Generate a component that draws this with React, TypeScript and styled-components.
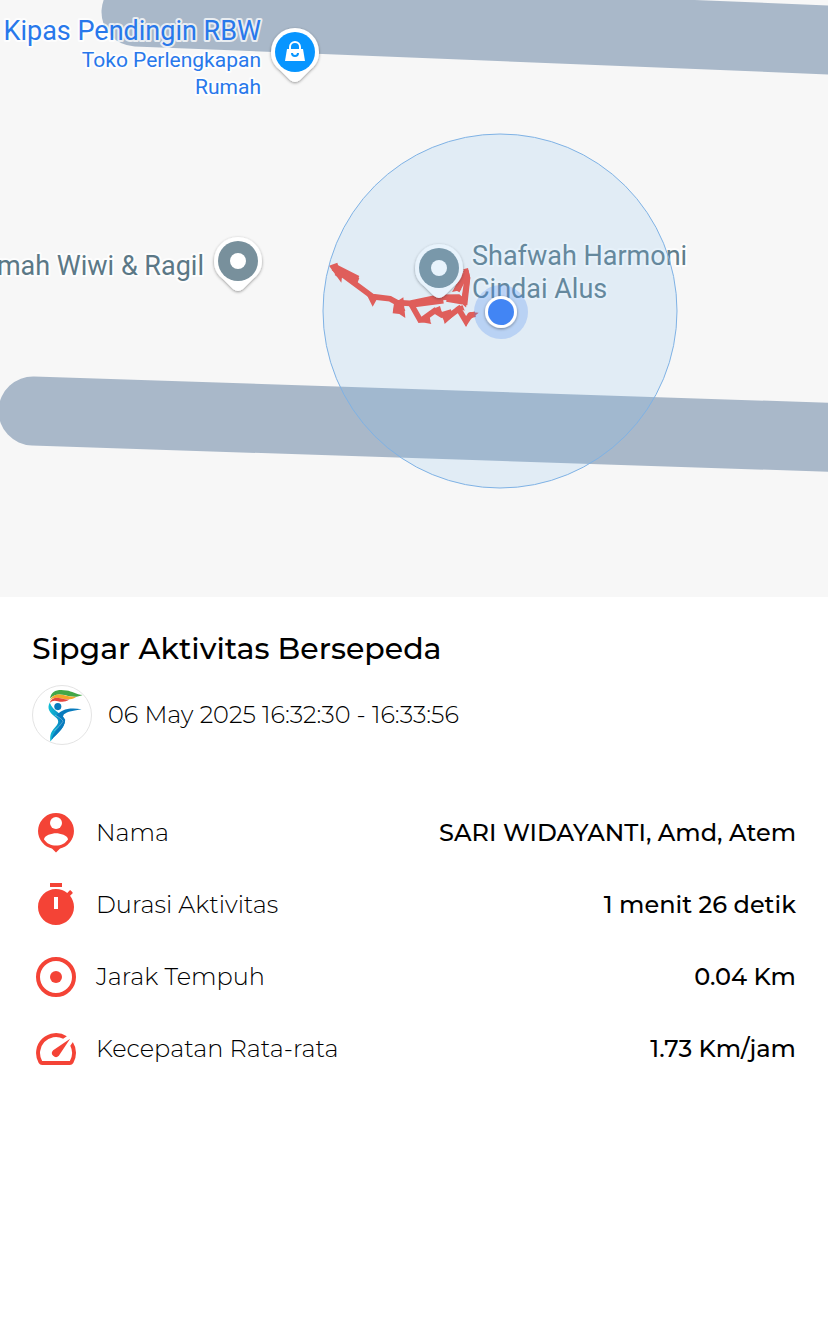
import React from "react";
import styled, { createGlobalStyle } from "styled-components";

const GlobalStyle = createGlobalStyle`
  *, *::before, *::after { box-sizing: border-box; }
  body {
    margin: 0;
    background: #ffffff;
    color: #000000;
    font-family: Montserrat, Inter, "Liberation Sans", sans-serif;
  }
`;

const Page = styled.main`
  display: flex;
  flex-direction: column;
  min-height: 100vh;
`;

const MapView = styled.svg`
  display: block;
  width: 100%;
  height: auto;
  background: #f7f7f7;
`;

const MapLabel = styled.text<{ $color: string; $small?: boolean }>`
  font-family: Roboto, "Liberation Sans", sans-serif;
  font-size: ${(p) => (p.$small ? 21 : 27)}px;
  fill: ${(p) => p.$color};
  stroke: #ffffff;
  stroke-opacity: 0.75;
  stroke-width: 4px;
  stroke-linejoin: round;
  paint-order: stroke;
`;

const Details = styled.section`
  display: flex;
  flex-direction: column;
  padding: 36px 32px;
`;

const Title = styled.h1`
  margin: 0 0 20px;
  font-size: 30px;
  font-weight: 500;
  line-height: 32px;
`;

const Meta = styled.div`
  display: flex;
  align-items: center;
  gap: 16px;
  margin-bottom: 52px;
`;

const Avatar = styled.svg`
  flex: none;
  width: 60px;
  height: 60px;
  border: 1px solid #e4e4e4;
  border-radius: 50%;
`;

const DateText = styled.time`
  font-size: 24px;
  font-weight: 300;
  line-height: 32px;
`;

const Stats = styled.dl`
  display: flex;
  flex-direction: column;
  margin: 0;
`;

const StatRow = styled.div`
  display: flex;
  align-items: center;
  justify-content: space-between;
  gap: 16px;
  min-height: 72px;
`;

const StatLabel = styled.dt`
  display: flex;
  align-items: center;
  gap: 16px;
  font-size: 24px;
  font-weight: 300;
  line-height: 32px;
`;

const StatValue = styled.dd`
  margin: 0;
  font-size: 24px;
  font-weight: 500;
  line-height: 32px;
  text-align: right;
`;

const StatIcon = styled.svg`
  flex: none;
  width: 48px;
  height: 48px;
  fill: #f44336;
`;

const PersonIcon = () => (
  <StatIcon viewBox="0 0 24 24" aria-hidden="true">
    <path d="M12 2a9 9 0 0 0-3.2 17.4c.6.2 1 .3 1.3.5L12 21.7l1.9-1.8c.3-.2.7-.3 1.3-.5A9 9 0 0 0 12 2z" />
    <circle cx="12" cy="7" r="3" fill="#fff" />
    <path
      d="M12 18.3c-2.5 0-4.7-1.2-6-3.1 0-2 4-3.1 6-3.1s6 1.1 6 3.1c-1.3 1.9-3.5 3.1-6 3.1z"
      fill="#fff"
    />
  </StatIcon>
);

const TimerIcon = () => (
  <StatIcon viewBox="0 0 24 24" aria-hidden="true">
    <path d="M15 1H9v2h6V1zm-4 13h2V8h-2v6zm8.03-6.61l1.42-1.42c-.43-.51-.9-.99-1.41-1.41l-1.42 1.42C16.07 4.74 14.12 4 12 4c-4.97 0-9 4.03-9 9s4.02 9 9 9 9-4.03 9-9c0-2.12-.74-4.07-1.97-5.61z" fillRule="evenodd" />
  </StatIcon>
);

const DistanceIcon = () => (
  <StatIcon viewBox="0 0 24 24" aria-hidden="true">
    <circle cx="12" cy="12" r="9" fill="none" stroke="#f44336" strokeWidth="2" />
    <circle cx="12" cy="12" r="3" />
  </StatIcon>
);

const SpeedIcon = () => (
  <StatIcon viewBox="0 0 24 24" aria-hidden="true">
    <path d="M20.38 8.57l-1.23 1.85a8 8 0 0 1-.22 7.58H5.07A8 8 0 0 1 15.58 6.85l1.85-1.23A10 10 0 0 0 3.35 19a2 2 0 0 0 1.72 1h13.85a2 2 0 0 0 1.74-1 10 10 0 0 0-.27-10.44zm-9.79 6.84a2 2 0 0 0 2.83 0l5.66-8.49-8.49 5.66a2 2 0 0 0 0 2.83z" />
  </StatIcon>
);

const stats = [
  { label: "Nama", value: "SARI WIDAYANTI, Amd, Atem", Icon: PersonIcon },
  { label: "Durasi Aktivitas", value: "1 menit 26 detik", Icon: TimerIcon },
  { label: "Jarak Tempuh", value: "0.04 Km", Icon: DistanceIcon },
  { label: "Kecepatan Rata-rata", value: "1.73 Km/jam", Icon: SpeedIcon },
];

/* Teardrop marker; x and y are the centre of its round head. */
const Pin = ({
  x,
  y,
  color,
  children,
}: {
  x: number;
  y: number;
  color: string;
  children: React.ReactNode;
}) => (
  <g transform={`translate(${x} ${y})`}>
    <path
      d="M0-24A24 24 0 0 0-24 0c0 9 4 14 10 19l9 9q5 4 10 0l9-9c6-5 10-10 10-19A24 24 0 0 0 0-24z"
      fill="#fff"
      filter="url(#pinShadow)"
    />
    <circle r="20" fill={color} />
    {children}
  </g>
);

const ActivityMap = () => (
  <MapView viewBox="0 0 828 597" role="img" aria-label="Peta rute aktivitas">
    <defs>
      <filter id="pinShadow" x="-30%" y="-30%" width="160%" height="160%">
        <feDropShadow dx="0" dy="1" stdDeviation="1.500" floodColor="#000" floodOpacity="0.4" />
      </filter>
    </defs>

    <g stroke="#a9b8c9" strokeWidth="69" strokeLinecap="round">
      <path d="M136 12L880 42" />
      <path d="M33 411L880 439" />
    </g>

    <g
      transform="translate(310 220) scale(.33333)"
      fill="none"
      stroke="#f44a3b"
      strokeWidth="17"
      strokeLinejoin="miter"
    >
      <path d="M70 143L188 230L240 236L262 248L300 250L385 232L445 231L462 246L472 173L467 152" />
      <path d="M72 142L143 178M80 156L98 168" strokeWidth="22" />
      <path
        d="M302 250L330 300L360 295M338 298L374 272L395 285L425 276M402 300L446 267L468 304L480 286L496 283"
        strokeWidth="17"
      />
      <path d="M302 254L400 241M410 236L458 244M440 212L466 162" strokeWidth="19" />
      <path d="M262 244L256 277M266 250L280 275" strokeWidth="14" />
      <path
        d="M57 137L82 128L86 142L148 174L142 190L96 172L94 188ZM172 228L204 232L188 260ZM226 228L244 230L244 246ZM252 250L280 232L286 294L268 282L248 280ZM324 306L352 282L364 312L344 308ZM370 266L390 258L396 278ZM398 288L424 276L430 288L404 312ZM436 262L458 256L464 272ZM456 292L480 288L469 320ZM478 276L506 278L484 296ZM460 148L474 144L481 174L472 256L450 250L460 212L466 180ZM426 216L444 186L454 210Z"
        fill="#f44a3b"
        stroke="none"
      />
    </g>

    <Pin x={295} y={52} color="#0795ff">
      <path d="M-8-3H8L10 9H-10Z" fill="#fff" />
      <path d="M-5-2V-5a5 5 0 0 1 10 0v3" fill="none" stroke="#fff" strokeWidth="2" />
      <path d="M-3 1a3 3 0 0 0 6 0" fill="none" stroke="#0795ff" strokeWidth="2" />
    </Pin>
    <Pin x={238} y={261} color="#78909c">
      <circle r="8" fill="#fff" />
    </Pin>
    <Pin x={439} y={268} color="#78909c">
      <circle r="8" fill="#fff" />
    </Pin>

    <MapLabel x="261" y="40" textAnchor="end" $color="#2878eb">Kipas Pendingin RBW</MapLabel>
    <MapLabel x="261" y="67" textAnchor="end" $small $color="#2878eb">Toko Perlengkapan</MapLabel>
    <MapLabel x="261" y="94" textAnchor="end" $small $color="#2878eb">Rumah</MapLabel>
    <MapLabel x="204" y="275" textAnchor="end" $color="#5b7886">mah Wiwi &amp; Ragil</MapLabel>
    <MapLabel x="472" y="265" $color="#607d8b">Shafwah Harmoni</MapLabel>
    <MapLabel x="472" y="298" $color="#607d8b">Cindai Alus</MapLabel>

    <circle cx="500" cy="311" r="177" fill="#82bff1" fillOpacity="0.180" stroke="#7fb2e5" strokeWidth="1" />
    <circle cx="501" cy="312" r="27" fill="#4285f4" fillOpacity="0.250" />
    <circle cx="501" cy="312" r="16" fill="#fff" filter="url(#pinShadow)" />
    <circle cx="501" cy="312" r="13" fill="#4285f4" />
  </MapView>
);

const SipgarLogo = () => (
  <Avatar viewBox="24 27 180 180" role="img" aria-label="Sipgar">
    <defs>
      <linearGradient id="bodyBlue" x1="0" y1="0" x2="1" y2="0">
        <stop offset="0" stopColor="#13bfd6" />
        <stop offset="1" stopColor="#0878bd" />
      </linearGradient>
    </defs>
    <path d="M77 66C79 41 103 36 128 41C145 43 158 53 178 55C158 64 140 60 123 55C103 51 88 53 77 66Z" fill="#43a747" />
    <path d="M76 73C84 52 105 50 122 56C134 60 145 61 158 61C142 71 125 69 112 66C96 62 85 63 76 73Z" fill="#f3a62b" />
    <path d="M76 80C80 64 96 61 109 65C119 68 127 69 137 69C124 78 111 76 101 74C91 71 83 72 76 80Z" fill="#e5463e" />
    <path d="M76 78C66 98 76 109 94 124C108 135 102 145 92 156C78 171 76 182 78 200C88 181 123 161 123 134C121 116 84 105 76 78Z" fill="url(#bodyBlue)" />
    <path d="M97 119C109 100 136 92 175 99C151 103 130 106 120 115L117 122L124 132C123 160 96 176 82 194C83 171 111 157 110 137C110 130 104 124 97 119Z" fill="#087bbd" />
    <path d="M92 117Q116 130 117 137Q108 152 90 166" fill="none" stroke="#fff" strokeWidth="1" />
    <circle cx="101" cy="91" r="11" fill="#087bbd" />
  </Avatar>
);

export default function App() {
  return (
    <Page>
      <GlobalStyle />
      <ActivityMap />
      <Details>
        <Title>Sipgar Aktivitas Bersepeda</Title>
        <Meta>
          <SipgarLogo />
          <DateText>06 May 2025 16:32:30 - 16:33:56</DateText>
        </Meta>
        <Stats>
          {stats.map(({ label, value, Icon }) => (
            <StatRow key={label}>
              <StatLabel>
                <Icon />
                {label}
              </StatLabel>
              <StatValue>{value}</StatValue>
            </StatRow>
          ))}
        </Stats>
      </Details>
    </Page>
  );
}
